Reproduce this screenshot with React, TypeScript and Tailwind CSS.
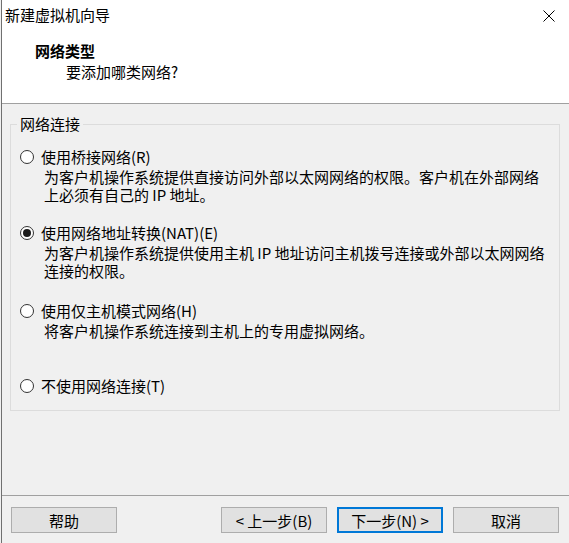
import React from "react";

type Option = {
  label: string;
  desc?: string[];
  checked?: boolean;
  mt: string;
};

const options: Option[] = [
  {
    label: "使用桥接网络(R)",
    desc: [
      "为客户机操作系统提供直接访问外部以太网网络的权限。客户机在外部网络",
      "上必须有自己的 IP 地址。",
    ],
    mt: "mt-[22px]",
  },
  {
    label: "使用网络地址转换(NAT)(E)",
    desc: [
      "为客户机操作系统提供使用主机 IP 地址访问主机拨号连接或外部以太网网络",
      "连接的权限。",
    ],
    checked: true,
    mt: "mt-[19px]",
  },
  {
    label: "使用仅主机模式网络(H)",
    desc: ["将客户机操作系统连接到主机上的专用虚拟网络。"],
    mt: "mt-[21px]",
  },
  {
    label: "不使用网络连接(T)",
    mt: "mt-[36px]",
  },
];

function Radio({ checked }: { checked?: boolean }) {
  return (
    <span className="flex h-[14px] w-[14px] shrink-0 items-center justify-center rounded-full border border-[#333333] bg-white">
      {checked && <span className="h-[8px] w-[8px] rounded-full bg-[#1a1a1a]" />}
    </span>
  );
}

function Button({ children, primary }: { children: React.ReactNode; primary?: boolean }) {
  return (
    <button
      className={
        primary
          ? "flex h-[26px] w-[106px] items-center justify-center border-2 border-[#0078d7] bg-[#e1e1e1] text-[15px] leading-none text-black"
          : "flex h-[26px] w-[106px] items-center justify-center border border-[#adadad] bg-[#e1e1e1] text-[15px] leading-none text-black"
      }
    >
      {children}
    </button>
  );
}

export default function App() {
  return (
    <div
      className="h-[543px] w-[569px] overflow-hidden bg-[#f0f0f0] pl-px text-black"
      style={{ fontFamily: '"Noto Sans CJK SC", "Noto Sans", sans-serif' }}
    >
      <div className="flex h-full flex-col border-l border-[#707070]">
        {/* header */}
        <div className="h-[104px] shrink-0 border-b border-[#a0a0a0] bg-white">
          <div className="flex h-[30px] items-center justify-between pl-[3px] pr-[14px]">
            <span className="text-[15px] leading-[30px]">新建虚拟机向导</span>
            <svg width="12" height="12" viewBox="0 0 12 12" className="mt-px">
              <path d="M0.5 0.5L11.5 11.5M11.5 0.5L0.5 11.5" stroke="#000" strokeWidth="1" />
            </svg>
          </div>
          <div className="mt-[11px] pl-[33px] text-[15px] font-bold leading-[20px]">网络类型</div>
          <div className="mt-px pl-[64px] text-[15px] leading-[20px]">要添加哪类网络?</div>
        </div>

        {/* body */}
        <div className="h-[391px] shrink-0 pl-[8px]">
          <div className="relative mt-[20px] h-[287px] w-[550px] border border-[#dcdcdc] pl-[9px]">
            <span className="absolute -top-[11px] left-[6px] bg-[#f0f0f0] px-[3px] text-[15px] leading-[20px]">
              网络连接
            </span>
            {options.map((o) => (
              <div key={o.label} className={o.mt}>
                <div className="flex h-[20px] items-center gap-[7px]">
                  <Radio checked={o.checked} />
                  <span className="text-[15px] leading-[20px]">{o.label}</span>
                </div>
                {o.desc && (
                  <div className="mt-px pl-[24px] text-[15px] leading-[18px]">
                    {o.desc.map((d) => (
                      <div key={d} className="whitespace-nowrap">
                        {d}
                      </div>
                    ))}
                  </div>
                )}
              </div>
            ))}
          </div>
        </div>

        {/* footer */}
        <div className="flex flex-1 items-start border-t border-[#a0a0a0] pl-[9px] pr-[10px] pt-[11px]">
          <Button>帮助</Button>
          <div className="flex-1" />
          <div className="flex gap-[10px]">
            <Button>&lt; 上一步(B)</Button>
            <Button primary>下一步(N) &gt;</Button>
            <Button>取消</Button>
          </div>
        </div>
      </div>
    </div>
  );
}
